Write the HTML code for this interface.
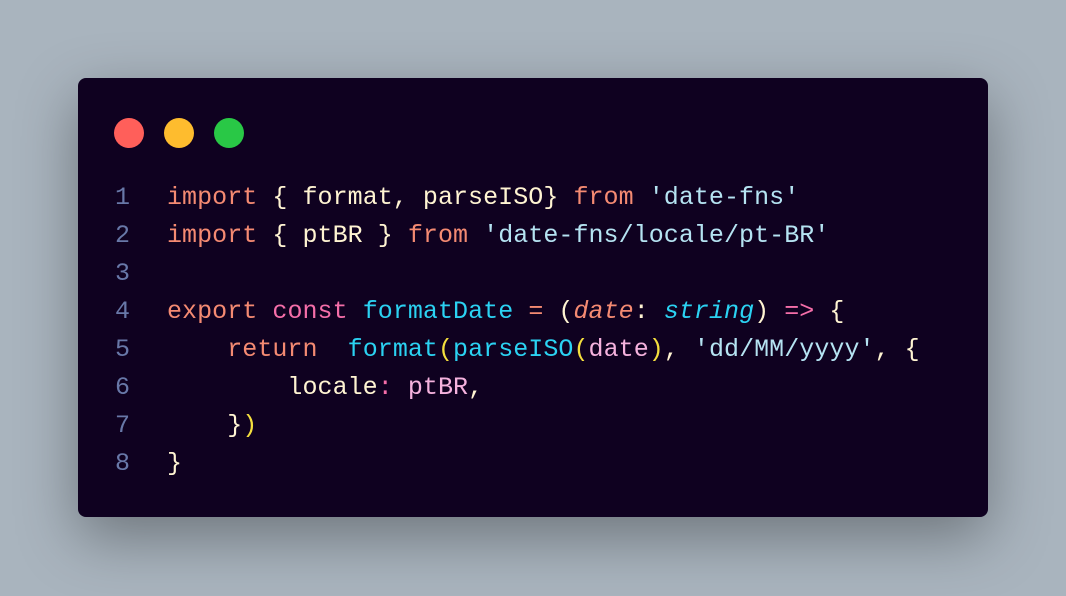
<!DOCTYPE html>
<html><head><meta charset="utf-8"><style>
body{margin:0;width:1066px;height:596px;background:#a9b4be;overflow:hidden;position:relative}
.win{position:absolute;left:78px;top:78px;width:910px;height:439px;background:#0f0120;border-radius:8px;box-shadow:0 20px 60px rgba(0,0,0,.35)}
.dot{position:absolute;top:40px;width:30px;height:30px;border-radius:50%}
pre{position:absolute;left:0;top:101px;margin:0;font-family:"Liberation Mono",monospace;font-size:25px;line-height:38px;color:#fff4d2;letter-spacing:0.05px;font-weight:500}
.n{display:inline-block;width:52px;text-align:right;color:#6878a8;margin-right:37px}
.k{color:#f48a72}.c{color:#f56ea9}.f{color:#2bd2f2}.s{color:#b5e3f2}.p{color:#f5b2de}.y{color:#f4df3e}
i{font-style:italic}
</style></head><body>
<div class="win">
<div class="dot" style="left:36px;background:#ff5f5a"></div>
<div class="dot" style="left:86px;background:#febc2e"></div>
<div class="dot" style="left:136px;background:#29c846"></div>
<pre><span class="n">1</span><span class="k">import</span> { format, parseISO} <span class="k">from</span> <span class="s">'date-fns'</span>
<span class="n">2</span><span class="k">import</span> { ptBR } <span class="k">from</span> <span class="s">'date-fns/locale/pt-BR'</span>
<span class="n">3</span>
<span class="n">4</span><span class="k">export</span> <span class="c">const</span> <span class="f">formatDate</span> <span class="k">=</span> (<i class="k">date</i>: <i class="f">string</i>) <span class="c">=&gt;</span> {
<span class="n">5</span>    <span class="k">return</span>  <span class="f">format</span><span class="y">(</span><span class="f">parseISO</span><span class="y">(</span><span class="p">date</span><span class="y">)</span>, <span class="s">'dd/MM/yyyy'</span>, {
<span class="n">6</span>        locale<span class="c">:</span> <span class="p">ptBR</span>,
<span class="n">7</span>    }<span class="y">)</span>
<span class="n">8</span>}</pre>
</div>
</body></html>
